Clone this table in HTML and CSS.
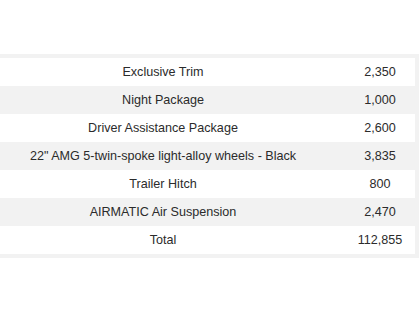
FILE: index.html
```html
<!DOCTYPE html>
<html>
<head>
<meta charset="utf-8">
<link rel="stylesheet" href="styles.css">
</head>
<body>
<div class="frame">
  <table class="price-table">
    <tbody>
      <tr><td class="name">Exclusive Trim</td><td class="value">2,350</td></tr>
      <tr><td class="name">Night Package</td><td class="value">1,000</td></tr>
      <tr><td class="name">Driver Assistance Package</td><td class="value">2,600</td></tr>
      <tr><td class="name">22" AMG 5-twin-spoke light-alloy wheels - Black</td><td class="value">3,835</td></tr>
      <tr><td class="name">Trailer Hitch</td><td class="value">800</td></tr>
      <tr><td class="name">AIRMATIC Air Suspension</td><td class="value">2,470</td></tr>
      <tr><td class="name">Total</td><td class="value">112,855</td></tr>
    </tbody>
  </table>
</div>
</body>
</html>
```
FILE: styles.css
```css
html, body {
  margin: 0;
  padding: 0;
  background: #ffffff;
}
body {
  padding-top: 54px;
  font-family: "Liberation Sans", Arial, sans-serif;
  font-size: 12.6px;
  color: #2b2b2b;
  overflow: hidden;
}
.frame {
  margin-left: -23px;
  width: 442px;
  box-sizing: border-box;
  padding: 4px;
  background: #f2f2f2;
}
.price-table {
  width: 100%;
  border-collapse: collapse;
  table-layout: fixed;
}
.price-table td {
  height: 28px;
  padding: 0;
  text-align: center;
  vertical-align: middle;
}
.price-table .value {
  width: 70px;
}
.price-table tr:nth-child(odd) {
  background: #ffffff;
}
.price-table tr:nth-child(even) {
  background: #f2f2f2;
}
```
